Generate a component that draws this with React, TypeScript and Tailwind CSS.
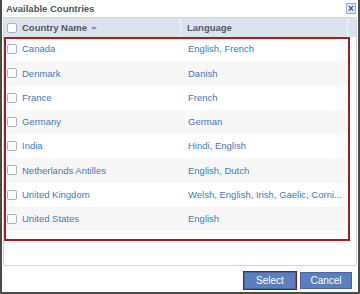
import React from "react";

const rows: [string, string][] = [
  ["Canada", "English, French"],
  ["Denmark", "Danish"],
  ["France", "French"],
  ["Germany", "German"],
  ["India", "Hindi, English"],
  ["Netherlands Antilles", "English, Dutch"],
  ["United Kingdom", "Welsh, English, Irish, Gaelic, Corni..."],
  ["United States", "English"],
];

function Box() {
  return (
    <span className="block w-[10px] h-[10px] shrink-0 rounded-[2px] border border-[#a6b3c4] bg-white" />
  );
}

export default function App() {
  return (
    <div className="w-[360px] h-[294px] bg-white border-x-2 border-b-2 border-[#4a4a4a] flex flex-col font-['Liberation_Sans',Arial,sans-serif] text-[9.5px]">
      <div className="h-[17px] flex items-center justify-between pl-[4px] pr-[2px]">
        <span className="font-bold text-[#4a5666] text-[9.5px] leading-none">Available Countries</span>
        <span className="w-[10px] h-[11px] border border-[#9fb3d1] bg-[#dce6f4] flex items-center justify-center text-[#34548a] text-[10px] font-bold leading-none">
          ×
        </span>
      </div>
      <div className="mx-px h-[249px] border border-[#d6d6d6] flex flex-col">
        <div className="h-[19px] bg-[#dce3ec] flex shrink-0">
          <div className="w-[177px] border-r border-[#eef1f5] flex items-center pl-[3px] gap-[5px]">
            <Box />
            <span className="font-bold text-[#4e5a68] leading-none">Country Name</span>
            <span className="ml-[-1px] w-0 h-0 border-x-[3px] border-x-transparent border-b-[3px] border-b-[#6f93c6]" />
          </div>
          <div className="flex-1 border-r border-[#eef1f5] flex items-center pl-[6px]">
            <span className="font-bold text-[#4e5a68] leading-none">Language</span>
          </div>
          <div className="w-[8px]" />
        </div>
        <div className="w-[346px] h-[204px] outline-2 -outline-offset-2 outline-[#a81c22] flex flex-col">
          {rows.map(([c, l], i) => (
            <div
              key={c}
              className={`h-[24.25px] shrink-0 flex items-center ${i % 2 === 1 ? "bg-[#f7f7f7]" : "bg-white"}`}
            >
              <div className="w-[177px] flex items-center pl-[3px] gap-[5px]">
                <Box />
                <span className="text-[#3d7bbf] leading-none">{c}</span>
              </div>
              <div className="flex-1 min-w-0 pl-[7px] whitespace-nowrap text-[#3d7bbf] leading-none">
                {l}
              </div>
            </div>
          ))}
        </div>
      </div>
      <div className="flex-1 flex items-start justify-end pt-[6px] pr-[6px] gap-[4px]">
        <button className="w-[52px] h-[17px] bg-[#5a7ec0] border border-[#46669f] text-white text-[10px] leading-none outline-1 outline-[#8a1a1a]">
          Select
        </button>
        <button className="w-[52px] h-[17px] bg-[#5a7ec0] border border-[#46669f] text-white text-[10px] leading-none">
          Cancel
        </button>
      </div>
    </div>
  );
}
